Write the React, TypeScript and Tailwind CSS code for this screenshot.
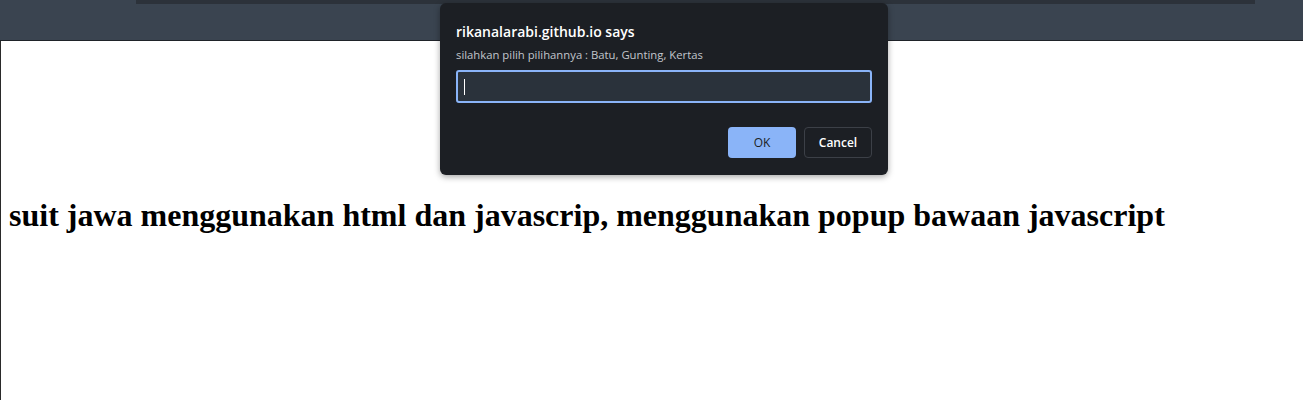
export default function App() {
  return (
    <div className="relative h-[400px] w-[1303px] overflow-hidden bg-white">
      {/* dimmed top of the page behind the prompt */}
      <div className="h-[41px] border-b border-[#1f2329] bg-[#3a4450]">
        <div className="ml-[136px] h-[4px] w-[1119px] bg-[#2c323a]" />
      </div>

      <div className="h-[359px] border-l border-[#2a2a2a] pl-2 pt-[156px]">
        <h1 className="whitespace-nowrap font-['Liberation_Serif',serif] text-[32px] font-bold leading-[37px] text-black">
          suit jawa menggunakan html dan javascrip, menggunakan popup bawaan javascript
        </h1>
      </div>

      {/* window.prompt dialog */}
      <div className="absolute left-[440px] top-[3px] flex h-[172px] w-[448px] flex-col rounded-[6px] bg-[#1c1f24] px-4 pt-[20px] font-['Segoe_UI','Open_Sans',sans-serif] shadow-[0_2px_6px_rgba(0,0,0,0.35)]">
        <div className="text-[14px] font-semibold leading-[18px] text-white">rikanalarabi.github.io says</div>
        <div className="mt-[7px] text-[11.3px] leading-[14px] text-[#c2c6cc]">
          silahkan pilih pilihannya : Batu, Gunting, Kertas
        </div>
        <div className="mt-[8px] flex h-[33px] items-center rounded-[3px] border-2 border-[#8ab4f8] bg-[#2a323b] px-[6px]">
          <span className="h-[16px] w-px bg-white" />
        </div>
        <div className="mt-[24px] flex justify-end gap-2">
          <button className="flex h-[31px] w-[68px] items-center justify-center rounded-[4px] bg-[#8ab4f8] text-[12px] text-[#1c1f24]">
            OK
          </button>
          <button className="flex h-[31px] w-[68px] items-center justify-center rounded-[4px] border border-[#3c4047] text-[12px] font-semibold text-white">
            Cancel
          </button>
        </div>
      </div>
    </div>
  );
}
